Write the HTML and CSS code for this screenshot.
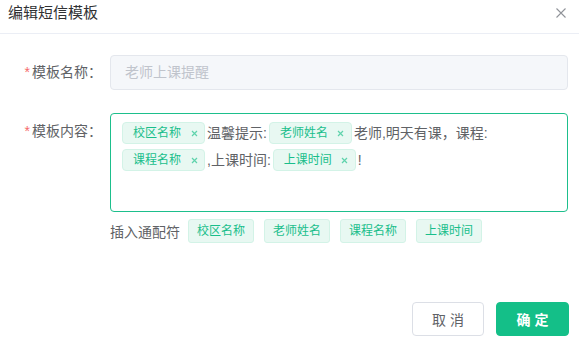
FILE: index.html
```html
<!DOCTYPE html>
<html lang="zh">
<head>
<meta charset="utf-8">
<title>编辑短信模板</title>
<link rel="stylesheet" href="styles.css">
</head>
<body>
<div class="dialog">
  <div class="header">
    <div class="title">编辑短信模板</div>
    <svg class="close" width="10" height="10" viewBox="0 0 10 10"><path d="M0.5 0.5L9.5 9.5M9.5 0.5L0.5 9.5" stroke="#909399" stroke-width="1.1" fill="none"/></svg>
  </div>
  <div class="form">
    <div class="row">
      <label class="label"><span class="req">*</span>模板名称：</label>
      <div class="input">老师上课提醒</div>
    </div>
    <div class="row row-area">
      <label class="label"><span class="req">*</span>模板内容：</label>
      <div class="area"><span class="tag">校区名称<span class="x"><svg width="7" height="7" viewBox="0 0 7 7"><path d="M1 1L6 6M6 1L1 6" stroke="#5fd3ac" stroke-width="1.2"/></svg></span></span>温馨提示:<span class="tag">老师姓名<span class="x"><svg width="7" height="7" viewBox="0 0 7 7"><path d="M1 1L6 6M6 1L1 6" stroke="#5fd3ac" stroke-width="1.2"/></svg></span></span>老师,明天有课，课程:<span class="tag">课程名称<span class="x"><svg width="7" height="7" viewBox="0 0 7 7"><path d="M1 1L6 6M6 1L1 6" stroke="#5fd3ac" stroke-width="1.2"/></svg></span></span>,上课时间:<span class="tag">上课时间<span class="x"><svg width="7" height="7" viewBox="0 0 7 7"><path d="M1 1L6 6M6 1L1 6" stroke="#5fd3ac" stroke-width="1.2"/></svg></span></span>!</div>
    </div>
    <div class="insert">
      <span class="insert-label">插入通配符</span>
      <span class="chip">校区名称</span>
      <span class="chip">老师姓名</span>
      <span class="chip">课程名称</span>
      <span class="chip">上课时间</span>
    </div>
  </div>
  <div class="footer">
    <button class="btn btn-cancel">取 消</button>
    <button class="btn btn-ok">确 定</button>
  </div>
</div>
</body>
</html>
```

FILE: styles.css
```css
* { box-sizing: border-box; }
html, body { margin: 0; padding: 0; background: #fff; }
body {
  font-family: "Liberation Sans", "Noto Sans CJK SC", sans-serif;
  color: #606266;
  font-size: 14px;
}
.dialog { width: 579px; height: 352px; }
.header {
  height: 34px;
  border-bottom: 1px solid #ebeef5;
  display: flex;
  justify-content: space-between;
  align-items: flex-start;
  padding-left: 8px;
}
.title { font-size: 15px; line-height: 26px; color: #303133; }
.close { margin-top: 8px; margin-right: 13px; }
.form { padding-top: 21px; }
.row { display: flex; align-items: flex-start; }
.label {
  width: 110px;
  flex: 0 0 110px;
  text-align: right;
  padding-right: 8px;
  line-height: 35px;
  font-size: 14px;
  color: #606266;
}
.req { color: #f56c6c; margin-right: 2px; }
.input {
  width: 458px;
  height: 35px;
  line-height: 33px;
  background: #f5f7fa;
  border: 1px solid #e4e7ed;
  border-radius: 4px;
  padding-left: 14px;
  color: #c0c4cc;
}
.row-area { margin-top: 23px; }
.row-area .label { line-height: 36px; }
.area {
  width: 458px;
  height: 99px;
  border: 1px solid #1dbf8c;
  border-radius: 4px;
  padding: 6px 9px;
  line-height: 27px;
  color: #606266;
}
.tag {
  display: inline-flex;
  align-items: center;
  height: 22px;
  line-height: 20px;
  margin: 0 2px;
  padding: 0 2px 0 10px;
  font-size: 12px;
  color: #19be8b;
  background: #e8f8f2;
  border: 1px solid #d3f3e7;
  border-radius: 4px;
  vertical-align: middle;
  position: relative;
  top: -1px;
}
.x {
  width: 16px;
  margin-left: 5px;
  display: inline-flex;
  justify-content: center;
  align-items: center;
}
.insert {
  margin-top: 7px;
  margin-left: 110px;
  display: flex;
  align-items: center;
  height: 24px;
}
.insert-label { margin-right: 8px; font-size: 14px; color: #606266; }
.chip {
  width: 66px;
  height: 24px;
  line-height: 22px;
  text-align: center;
  font-size: 12px;
  color: #19be8b;
  background: #e8f8f2;
  border: 1px solid #d3f3e7;
  border-radius: 3px;
  margin-right: 10px;
}
.footer {
  margin-top: 59px;
  display: flex;
  justify-content: flex-end;
  padding-right: 10px;
  gap: 12px;
}
.btn {
  height: 34px;
  border-radius: 4px;
  font-family: "Liberation Sans", "Noto Sans CJK SC", sans-serif;
  font-size: 14px;
  padding: 0;
  cursor: pointer;
}
.btn-cancel {
  width: 72px;
  background: #fff;
  border: 1px solid #dcdfe6;
  color: #606266;
}
.btn-ok {
  width: 73px;
  background: #14bf88;
  border: 1px solid #14bf88;
  color: #fff;
  font-weight: bold;
}
```
